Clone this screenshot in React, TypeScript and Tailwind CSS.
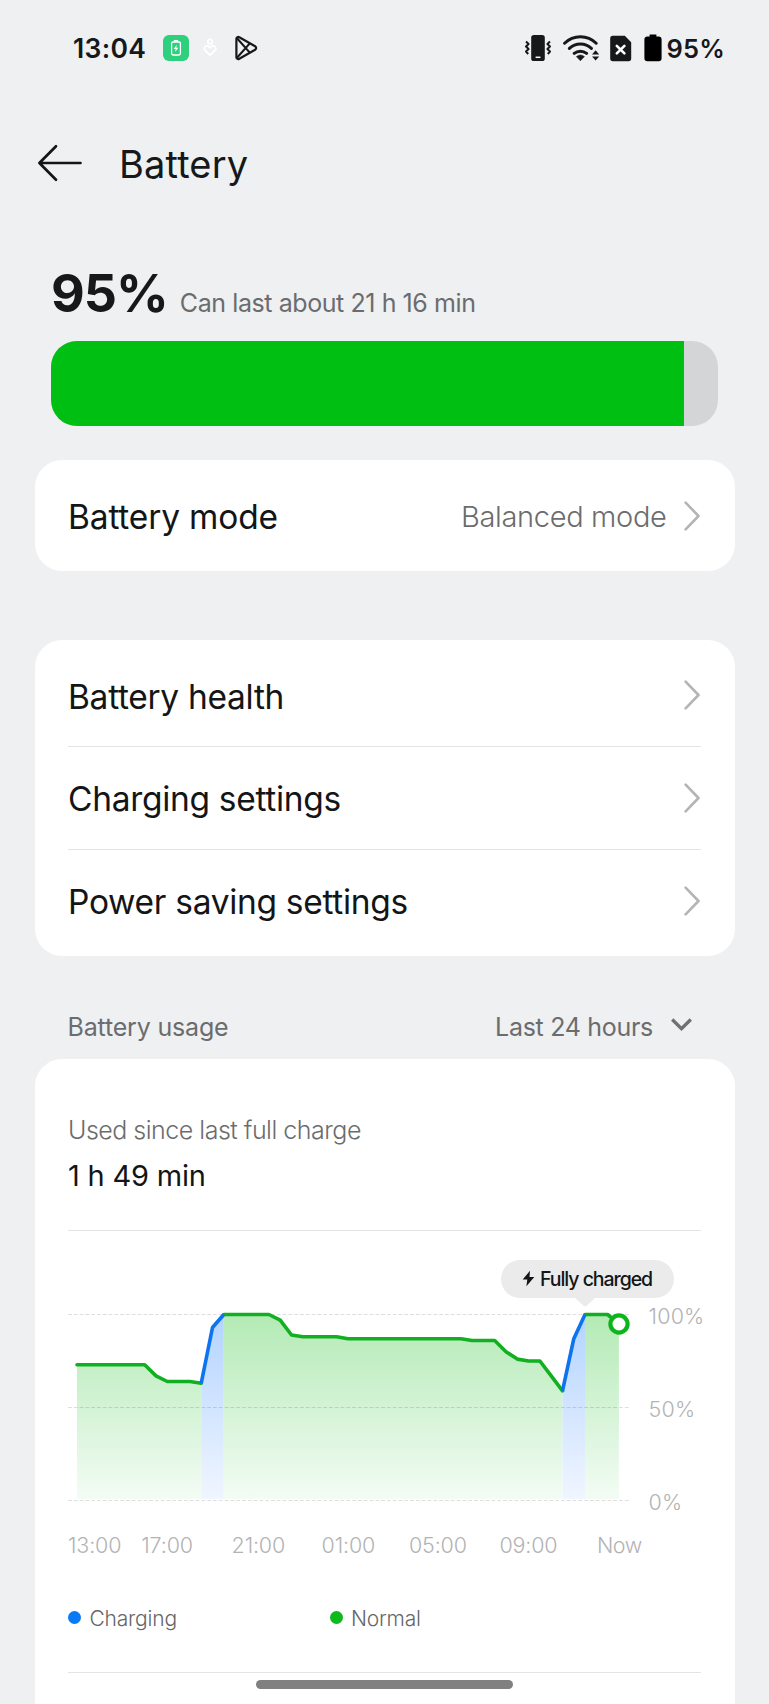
import type { ReactNode } from 'react';

const LEVELS: number[] = [
  73, 73, 73, 73, 73, 73, 73, 67, 64, 64, 64, 63, 93, 100, 100, 100, 100, 100, 97, 89, 88, 88, 88, 88, 87,
  87, 87, 87, 87, 87, 87, 87, 87, 87, 87, 86, 86, 86, 80, 76, 75, 75, 67, 59, 87, 100, 100, 100, 95,
];

type Segment = { from: number; to: number; charging: boolean };

const SEGMENTS: Segment[] = [
  { from: 0, to: 11, charging: false },
  { from: 13, to: 43, charging: false },
  { from: 45, to: 48, charging: false },
  { from: 11, to: 13, charging: true },
  { from: 43, to: 45, charging: true },
];

const px = (i: number) => 9 + i * 11.29;
const py = (level: number) => 199.5 - level * 1.86;

function points({ from, to }: Segment) {
  return LEVELS.slice(from, to + 1)
    .map((level, k) => `${px(from + k).toFixed(1)},${py(level).toFixed(1)}`)
    .join(' ');
}

function UsageChart() {
  return (
    <svg width="562" height="216" viewBox="0 0 562 216" fill="none" className="shrink-0 overflow-visible">
      <defs>
        <linearGradient id="normal" gradientUnits="userSpaceOnUse" x1="0" y1="13" x2="0" y2="199">
          <stop offset="0" stopColor="#b3eab5" />
          <stop offset="1" stopColor="#f4fcf5" />
        </linearGradient>
        <linearGradient id="charging" gradientUnits="userSpaceOnUse" x1="0" y1="13" x2="0" y2="199">
          <stop offset="0" stopColor="#b2d3ff" />
          <stop offset="1" stopColor="#f1f6ff" />
        </linearGradient>
      </defs>
      {SEGMENTS.map((s) => (
        <polygon
          key={s.from}
          points={`${px(s.from).toFixed(1)},198 ${points(s)} ${px(s.to).toFixed(1)},198`}
          fill={s.charging ? 'url(#charging)' : 'url(#normal)'}
        />
      ))}
      {[13.5, 106.5, 199.5].map((y) => (
        <line key={y} x1="0" x2="561" y1={y} y2={y} stroke="#000" strokeOpacity="0.13" strokeWidth="1.2" strokeDasharray="3.8 2" />
      ))}
      {SEGMENTS.map((s) => (
        <polyline
          key={s.from}
          points={points(s)}
          stroke={s.charging ? '#0d73ee' : '#12b020'}
          strokeWidth="3.6"
          strokeLinejoin="round"
          strokeLinecap={s.charging ? 'butt' : 'round'}
        />
      ))}
      <circle cx="551" cy="23" r="8.6" fill="#fff" stroke="#0db51c" strokeWidth="4.2" />
    </svg>
  );
}

function ChevronRight() {
  return (
    <svg width="16" height="30" viewBox="0 0 16 30" fill="none" className="mr-px shrink-0">
      <path d="M1.6 1.6 14.5 15 1.6 28.4" stroke="#b4b4b5" strokeWidth="2.6" strokeLinecap="round" strokeLinejoin="round" />
    </svg>
  );
}

function Row({ children, value }: { children: ReactNode; value?: string }) {
  return (
    <div className="flex h-[102.5px] items-center justify-between">
      <span className="pt-[3px] text-[33.5px] leading-10 font-[430] text-[#141516]">{children}</span>
      <span className="flex items-center gap-[17px]">
        {value && (
          <span className="pt-[2px] text-[29px] leading-10 font-light tracking-[-0.34px] text-[#6c6c6d]">{value}</span>
        )}
        <ChevronRight />
      </span>
    </div>
  );
}

function StatusBar() {
  return (
    <div className="flex h-[96px] shrink-0 items-center justify-between pr-[44px] pl-[73px]">
      <div className="flex items-center">
        <span className="w-[72px] text-[26.5px] leading-8 font-semibold tracking-[0.3px] text-[#17181a]">13:04</span>
        <svg width="26" height="26" viewBox="0 0 26 26" fill="none" className="ml-[18px]">
          <rect width="26" height="26" rx="6" fill="#2ed07e" />
          <path d="M10.8 5.8h4.4" stroke="#fff" strokeWidth="1.6" />
          <rect x="8.6" y="7" width="8.8" height="13" rx="1.4" stroke="#fff" strokeWidth="1.3" />
          <path d="m13.7 9.8-3 4.2h1.9l-.4 3.1 3.1-4.3h-2z" fill="#fff" />
        </svg>
        <svg width="14" height="20" viewBox="0 0 14 20" fill="none" className="ml-[14px]">
          <circle cx="7" cy="3.6" r="2.3" stroke="#fff" strokeWidth="1.8" />
          <path d="M7 17.2 1.9 12.1a2.6 2.6 0 0 1 3.7-3.6L7 9.8l1.4-1.3a2.6 2.6 0 0 1 3.7 3.6z" stroke="#fff" strokeWidth="1.9" strokeLinejoin="round" />
        </svg>
        <svg width="24" height="26" viewBox="0 0 24 26" fill="none" className="ml-[16.5px]">
          <path
            d="M2.4 3.8v18.4c0 1.6 1.6 2.3 2.9 1.5l15.8-8.9c1.4-.8 1.4-2.8 0-3.6L5.3 2.3C4 1.5 2.4 2.2 2.4 3.8z"
            stroke="#17181a"
            strokeWidth="2.2"
            strokeLinejoin="round"
          />
          <path d="M3 3.2 15.8 17.6M3 22.8 15.8 8.4" stroke="#17181a" strokeWidth="2.1" strokeLinejoin="round" />
        </svg>
      </div>
      <div className="flex items-center">
        <svg width="28" height="28" viewBox="0 0 28 28" fill="none">
          <rect x="7.2" y="1" width="13.6" height="26" rx="2.6" fill="#17181a" />
          <path d="M11.6 23.3h4.8" stroke="#fff" strokeWidth="1.5" />
          <path d="M2 7.5 4.6 10 2 12.5 4.6 15 2 17.5 4.2 20M26 7.5 23.4 10l2.6 2.5-2.6 2.5 2.6 2.5-2.2 2.5" stroke="#17181a" strokeWidth="2" strokeLinejoin="round" />
        </svg>
        <svg width="37" height="28" viewBox="0 0 37 28" fill="none" className="ml-[11px]">
          <path d="M1.6 9.2a22.5 22.5 0 0 1 31.6 0M6.4 14.4a16 16 0 0 1 22 0M11.2 19.4a9.6 9.6 0 0 1 12.4 0" stroke="#17181a" strokeWidth="3" strokeLinecap="round" />
          <path d="M13.4 22.6a6.5 6.5 0 0 1 8 0L17.4 26.8z" fill="#17181a" stroke="#17181a" strokeWidth="0.6" strokeLinejoin="round" />
          <path d="M32.6 16.2 36.2 20.4H29zM32.6 26.6 29 22.4h7.2z" fill="#17181a" />
        </svg>
        <svg width="22" height="27" viewBox="0 0 22 27" fill="none" className="ml-[10px]">
          <path d="M2.8.8h12l6.4 6.4v16.4a2.6 2.6 0 0 1-2.6 2.6H2.8A2.6 2.6 0 0 1 .2 23.6V3.4A2.6 2.6 0 0 1 2.8.8z" fill="#17181a" />
          <path d="m6.8 10.8 7.6 7.6M14.4 10.8 6.8 18.4" stroke="#fff" strokeWidth="2.6" strokeLinecap="round" />
        </svg>
        <svg width="18" height="28" viewBox="0 0 18 28" fill="none" className="ml-[12px]">
          <path d="M5.6.6h6.8v2h2.2a3 3 0 0 1 3 3v18.6a3 3 0 0 1-3 3H3.4a3 3 0 0 1-3-3V5.6a3 3 0 0 1 3-3h2.200z" fill="#000" />
        </svg>
        <span className="ml-[4.5px] pt-px text-[25.5px] leading-8 font-semibold tracking-[0.2px] text-[#17181a]">95%</span>
      </div>
    </div>
  );
}

function Legend({ dot, label }: { dot: string; label: string }) {
  return (
    <div className="flex w-[261.5px] items-center">
      <span className={`-mt-[3px] size-[13px] rounded-full ${dot}`} />
      <span className="ml-[8.5px] text-[21px] leading-[30px] font-[350] tracking-[-0.2px] text-[#666668]">{label}</span>
    </div>
  );
}

export default function App() {
  return (
    <div className="relative flex h-[1704px] w-[769px] flex-col overflow-hidden bg-[#eff0f2] font-['Inter',sans-serif]">
      <StatusBar />

      <header className="flex h-[136px] shrink-0 items-center pl-[37px]">
        <svg width="46" height="38" viewBox="0 0 46 38" fill="none" className="-mt-[3px]">
          <path d="M19 2.2 2.4 19 19 35.8M2.4 19H43.5" stroke="#141516" strokeWidth="2.7" strokeLinecap="round" strokeLinejoin="round" />
        </svg>
        <h1 className="-mt-px ml-[36px] text-[38px] leading-[48px] font-[430] tracking-[0.15px] text-[#17181a]">Battery</h1>
      </header>

      <div className="mt-[32px] flex h-[60px] shrink-0 items-baseline gap-[12px] pl-[51px]">
        <span className="text-[52px] leading-[60px] font-bold tracking-[-1px] text-[#17181a]">95%</span>
        <span className="text-[25px] leading-[30px] tracking-[-0.42px] text-[#6b6c6e]">Can last about 21 h 16 min</span>
      </div>

      <div className="mt-[16.5px] ml-[51px] h-[85px] w-[666.5px] shrink-0 overflow-hidden rounded-[26px] bg-[#d4d5d7]">
        <div className="h-full w-[95%] bg-[#00bf13]" />
      </div>

      <section className="mt-[34.5px] mr-[34px] ml-[34.5px] shrink-0 rounded-[27px] bg-white py-[4.25px] pr-[34.5px] pl-[33.5px] tracking-[-0.17px]">
        <Row value="Balanced mode">Battery mode</Row>
      </section>

      <section className="mt-[69px] mr-[34px] ml-[34.5px] shrink-0 divide-y divide-[#e4e4e5] rounded-[27px] bg-white pt-[4.5px] pr-[34.5px] pb-[4px] pl-[33.5px] tracking-[-0.3px]">
        <Row>Battery health</Row>
        <Row>Charging settings</Row>
        <Row>Power saving settings</Row>
      </section>

      <div className="flex h-[103px] shrink-0 items-center justify-between pt-[38px] pr-[77px] pl-[67.5px] text-[25px] leading-[30px] text-[#6b6c6e]">
        <span className="tracking-[-0.18px]">Battery usage</span>
        <span className="flex items-center gap-[18px] tracking-[-0.3px]">
          Last 24 hours
          <svg width="21" height="14" viewBox="0 0 21 14" fill="none" className="-mt-[3px]">
            <path d="M1.2 1.5 10.5 10.7 19.8 1.5" stroke="#6f7072" strokeWidth="3.3" />
          </svg>
        </span>
      </div>

      <section className="mr-[34px] ml-[34.5px] flex h-[700px] shrink-0 flex-col rounded-t-[27px] bg-white pt-[56px] pr-[34.5px] pl-[33.5px]">
        <p className="text-[25px] leading-[30px] font-light tracking-[-0.5px] text-[#6c6c6d]">Used since last full charge</p>
        <p className="mt-[11px] text-[29px] leading-[40px] tracking-[-0.2px] text-[#141516]">1 h 49 min</p>
        <div className="mt-[34px] h-px shrink-0 bg-[#e4e4e5]" />

        <div className="relative mt-[70px] flex h-[216px] shrink-0">
          <UsageChart />
          <div className="ml-[18.5px] flex flex-col justify-between text-[21.5px] leading-[30px] font-light tracking-[0.2px] whitespace-nowrap text-[#b3b3b4]">
            <span>100%</span>
            <span>50%</span>
            <span>0%</span>
          </div>
          <div className="absolute top-[-41.5px] left-[432.5px] flex h-[38.5px] w-[173px] items-center rounded-full bg-[#ebebeb] pl-[21.5px]">
            <svg width="13" height="17" viewBox="0 0 13 17">
              <path d="M8 .8.7 9.6h4.6L4.4 16.2 12.3 7H7.5z" fill="#141516" />
            </svg>
            <span className="ml-[5px] pt-px text-[19.5px] leading-[24px] font-medium tracking-[-1.05px] whitespace-nowrap text-[#141516]">Fully charged</span>
            <svg width="20" height="9" viewBox="0 0 20 9" className="absolute top-[38px] left-[74.5px]">
              <path d="M0 0h20l-8.2 7.4a2.6 2.6 0 0 1-3.6 0z" fill="#ebebeb" />
            </svg>
          </div>
        </div>

        <div className="mt-[12.5px] flex shrink-0 text-[21.5px] leading-[30px] font-light tracking-[-0.15px] whitespace-nowrap text-[#b3b3b4]">
          <span className="w-[73.3px]">13:00</span>
          <span className="w-[90.3px]">17:00</span>
          <span className="w-[90px]">21:00</span>
          <span className="w-[87.3px]">01:00</span>
          <span className="w-[90.5px]">05:00</span>
          <span className="w-[97.5px]">09:00</span>
          <span className="tracking-[-0.4px]">Now</span>
        </div>

        <div className="mt-[44.5px] flex">
          <Legend dot="bg-[#077bf7]" label="Charging" />
          <Legend dot="bg-[#0dba1c]" label="Normal" />
        </div>
        <div className="mt-[38px] h-px shrink-0 bg-[#e4e4e5]" />
      </section>

      <div className="absolute bottom-[15px] left-[256px] h-[9px] w-[256.5px] rounded-full bg-[#808080]" />
    </div>
  );
}
